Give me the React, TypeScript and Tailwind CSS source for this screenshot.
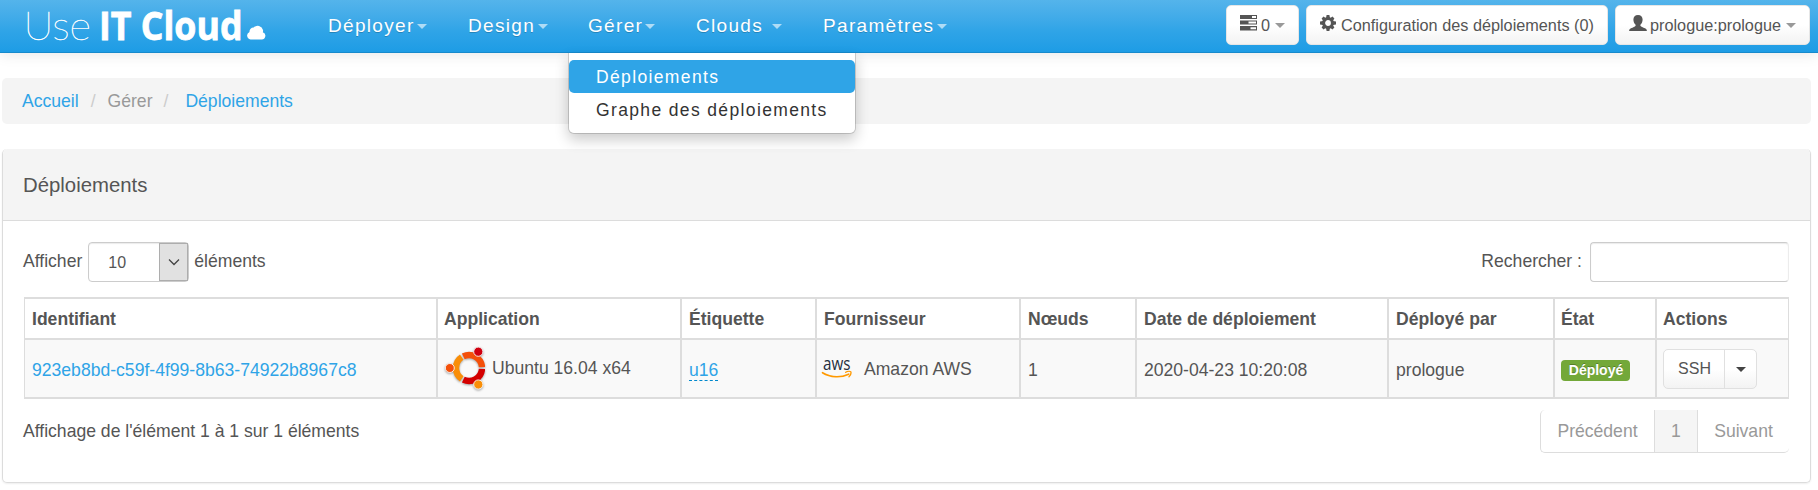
import React from "react";

const Caret = ({ className = "" }: { className?: string }) => (
  <span
    className={`inline-block h-0 w-0 border-x-[5px] border-t-[5px] border-x-transparent ${className}`}
  />
);

const Logo = () => (
  <svg className="h-[52px] w-[328px] shrink-0" viewBox="0 0 328 52" fill="#fff">
    <text x="23.500" y="39.5" fontFamily="Lato, sans-serif" fontWeight="100" fontSize="39" textLength="67.500" lengthAdjust="spacingAndGlyphs" stroke="#fff" strokeWidth="0.4">
      Use
    </text>
    <text x="99" y="39.5" fontFamily="'Open Sans', sans-serif" fontWeight="700" fontSize="38.5" textLength="143.5" lengthAdjust="spacingAndGlyphs" stroke="#fff" strokeWidth="0.8">
      IT Cloud
    </text>
    <path d="M250.500 39.500a4 4 0 0 1-1-7.600 4 4 0 0 1 4.200-4.300 5.400 5.400 0 0 1 9.300 2.400 3.600 3.600 0 0 1-.2 2.300 3.700 3.700 0 0 1-1.500 7.200z" />
  </svg>
);

const ServerIcon = () => (
  <svg className="h-4 w-[17px]" viewBox="0 0 17 16" fill="#555">
    <path fillRule="evenodd" d="M0 0h17v4H0zM12 1h4v2h-4zM0 5.500h17v4H0zM8.500 6.500h7.500v2H8.500zM0 11h17v4.500H0zM10.500 12.200h5.500v2h-5.500z" />
  </svg>
);

const GearIcon = () => (
  <svg className="h-4 w-4" viewBox="0 0 16 16">
    <circle cx="8" cy="8" r="4.400" fill="none" stroke="#555" strokeWidth="3" />
    <g fill="#555">
      <path d="M6.600 0h2.800l.6 3.200H6zM6.600 16h2.800l.6-3.200H6zM0 6.600v2.800l3.200.6V6zM16 6.600v2.800l-3.200.6V6z" />
      <path d="M1.600 3.500l1.900-1.900 2.800 1.800-2.900 2.900zM14.400 3.500l-1.900-1.900-2.800 1.800 2.900 2.900zM1.600 12.500l1.900 1.900 2.800-1.800-2.900-2.900zM14.400 12.500l-1.900 1.900-2.800-1.800 2.900-2.900z" />
    </g>
  </svg>
);

const UserIcon = () => (
  <svg className="h-4 w-[18px]" viewBox="0 0 18 16" fill="#555">
    <path d="M9 0c2.900 0 4.600 1.900 4.600 4.600 0 2.200-.8 4.200-2.200 5.200v1c.6 1.100 2.600 1.700 4.600 2.500 1.200.5 1.800 1.300 1.900 2.700H.1c.1-1.400.7-2.200 1.900-2.700 2-.8 4-1.400 4.600-2.500v-1C5.200 8.800 4.400 6.800 4.400 4.600 4.400 1.900 6.100 0 9 0z" />
  </svg>
);

const UbuntuIcon = () => (
  <svg className="h-11 w-10 drop-shadow-[0_1px_1px_rgba(0,0,0,0.35)]" viewBox="0 0 40 44">
    <g fill="none" strokeWidth="6.400">
      <path d="M16.730 31.780A13 13 0 0 1 16.730 10.220" stroke="#f98e08" />
      <path d="M18.300 9.320A13 13 0 0 1 36.970 20.090" stroke="#f4500a" />
      <path d="M36.970 21.910A13 13 0 0 1 18.300 32.680" stroke="#d40000" />
    </g>
    <g stroke="#f9f9f9" strokeWidth="0.900">
      <circle cx="33.300" cy="4.700" r="4.600" fill="#d00010" />
      <circle cx="4.800" cy="21" r="4.500" fill="#f4500a" />
      <circle cx="33.300" cy="37.500" r="4.600" fill="#f98e08" />
    </g>
  </svg>
);

const AwsIcon = () => (
  <svg className="h-5 w-[31px]" viewBox="0 0 31 20">
    <text x="2" y="12.200" fontFamily="'Open Sans', sans-serif" fontWeight="500" fontSize="17.500" textLength="27.500" lengthAdjust="spacingAndGlyphs" fill="#252f3e">
      aws
    </text>
    <path d="M1.500 14.700c8 4.800 18 5.200 26.200 1.500" fill="none" stroke="#f90" strokeWidth="1.600" strokeLinecap="round" />
    <path d="M24.700 14.300c2-1.200 4.500-1.200 5.200-.4.300 1.300-.5 3.600-1.900 4.900" fill="none" stroke="#f90" strokeWidth="1.300" strokeLinecap="round" />
  </svg>
);

const navItems = [
  { label: "Déployer", width: "w-[140px]", caret: "ml-[2px]" },
  { label: "Design", width: "w-[120px]", caret: "ml-[3px]" },
  { label: "Gérer", width: "w-[108px]", caret: "ml-[2px]" },
  { label: "Clouds", width: "w-[127px]", caret: "ml-[9px]" },
  { label: "Paramètres", width: "w-[140px]", caret: "ml-[3px]" },
];

const Menu = () => (
  <div className="absolute top-[53px] left-[-20px] z-10 h-[81px] w-[288px] rounded-b-[6px] border border-t-0 border-black/15 bg-white bg-clip-padding pt-[7px] text-[17.5px] tracking-[1.36px] whitespace-nowrap text-[#333] shadow-[0_6px_14px_rgba(0,0,0,0.2)] [text-shadow:none]">
    <div className="h-[33px] rounded-[5px] bg-[#2fa4e7] pl-[27px] leading-[35px] text-white">Déploiements</div>
    <div className="h-[33px] pl-[27px] leading-[35px]">Graphe des déploiements</div>
  </div>
);

const topButton =
  "flex h-10 shrink-0 items-center rounded-[5px] border border-[#e6e6e6] bg-linear-to-b from-white from-50% to-[#f3f3f3] text-[16.25px] whitespace-nowrap text-[#555]";

const Header = () => (
  <header className="relative z-10 flex h-[53px] border-b border-[#178acc] bg-linear-to-b from-[#54b4eb] via-[#2fa4e7] via-60% to-[#1d9ce5] shadow-[0_1px_14px_rgba(0,0,0,0.1)]">
    <Logo />
    <nav className="flex text-[19px] leading-[51px] tracking-[1.32px] text-white [text-shadow:0_1px_0_rgba(0,0,0,0.2)]">
      {navItems.map((item) => (
        <div key={item.label} className={`relative flex shrink-0 ${item.width}`}>
          {item.label}
          <Caret className={`mt-6 border-t-white/60 ${item.caret}`} />
          {item.label === "Gérer" && <Menu />}
        </div>
      ))}
    </nav>
    <div className="mt-[5px] ml-auto flex gap-[7px] pr-2">
      <div className={`w-[73px] pl-[13px] ${topButton}`}>
        <span className="-mt-1"><ServerIcon /></span>
        <span className="ml-[4px]">0</span>
        <Caret className="ml-[5px] border-t-[#999]" />
      </div>
      <div className={`w-[302px] pl-[13px] ${topButton}`}>
        <span className="-mt-1"><GearIcon /></span>
        <span className="ml-[5px]">Configuration des déploiements (0)</span>
      </div>
      <div className={`w-[195px] pl-[13px] ${topButton}`}>
        <span className="-mt-1"><UserIcon /></span>
        <span className="ml-[3px]">prologue:prologue</span>
        <Caret className="ml-[5px] border-t-[#999]" />
      </div>
    </div>
  </header>
);

const columns = [
  { label: "Identifiant", width: "w-[414px]", pad: "pl-[7px]" },
  { label: "Application", width: "w-[244px]", pad: "pl-[6px]" },
  { label: "Étiquette", width: "w-[135px]", pad: "pl-[7px]" },
  { label: "Fournisseur", width: "w-[204px]", pad: "pl-[7px]" },
  { label: "Nœuds", width: "w-[116px]", pad: "pl-[7px]" },
  { label: "Date de déploiement", width: "w-[252px]", pad: "pl-[7px]" },
  { label: "Déployé par", width: "w-[166px]", pad: "pl-[7px]" },
  { label: "État", width: "w-[102px]", pad: "pl-[6px]" },
  { label: "Actions", width: "w-[132px]", pad: "pl-[6px]" },
];

const cells = [
  <span className="mt-[3px] text-[#2fa4e7]">923eb8bd-c59f-4f99-8b63-74922b8967c8</span>,
  <span className="ml-px flex items-center">
    <UbuntuIcon />
    <span className="-mt-px ml-[7px]">Ubuntu 16.04 x64</span>
  </span>,
  <span className="mt-[3px] border-b border-dashed border-[#0088cc] leading-[20px] text-[#2fa4e7]">u16</span>,
  <span className="-ml-[3px] flex items-center">
    <AwsIcon />
    <span className="mt-px ml-[12px]">Amazon AWS</span>
  </span>,
  <span className="mt-[3px]">1</span>,
  <span className="mt-[3px]">2020-04-23 10:20:08</span>,
  <span className="mt-[3px]">prologue</span>,
  <span className="mt-[4px] block h-[21px] w-[69px] rounded-[4px] bg-[#73a839] pl-px text-center text-[14px] leading-[21px] font-bold text-white [text-shadow:0_-1px_0_rgba(0,0,0,0.25)]">
    Déployé
  </span>,
  <span className="flex h-10 w-[94px] rounded-[5px] border border-[#e0e0e0] bg-linear-to-b from-white from-50% to-[#f3f3f3] text-[16px] leading-[38px]">
    <span className="w-[61px] border-r border-[#e0e0e0] pl-px text-center">SSH</span>
    <span className="flex flex-1 items-center justify-center">
      <Caret className="mt-0.5 border-t-[#444]" />
    </span>
  </span>,
];

export default function App() {
  return (
    <div className="h-[490px] w-[1818px] overflow-hidden bg-white font-['Liberation_Sans',Arial,sans-serif] text-[17.58px] text-[#555]">
      <Header />
      <div className="mt-[25px] ml-[2px] flex h-[46px] w-[1809px] items-center rounded-[5px] bg-[#f4f4f4] pl-[20px] whitespace-pre">
        <span className="text-[#2fa4e7]">Accueil</span>
        <span className="ml-[12px] text-[#ccc]">/</span>
        <span className="ml-[12px] text-[#999]">Gérer</span>
        <span className="ml-[11px] text-[#ccc]">/</span>
        <span className="ml-[17px] text-[#2fa4e7]">Déploiements</span>
      </div>
      <section className="mt-[25px] ml-[2px] h-[334px] w-[1809px] rounded-[5px] border border-t-0 border-[#dcdcdc] shadow-[0_1px_2px_rgba(0,0,0,0.07)]">
        <h2 className="flex h-[72px] items-center rounded-t-[5px] border-b border-[#dcdcdc] bg-[#f4f4f4] pt-[2px] pl-5 text-[20.35px]">Déploiements</h2>
        <div className="mt-[21px] flex h-10 items-center pr-[21px] pl-5">
          <span className="-mt-px">Afficher</span>
          <div className="ml-[6px] flex h-10 w-[101px] rounded-[4px] border border-[#ccc] p-0 text-[16px] shadow-[inset_0_1px_1px_rgba(0,0,0,0.08)]">
            <span className="flex-1 pl-[19px] leading-[40px]">10</span>
            <span className="flex w-[29px] items-center justify-center border border-[#adadad] bg-[#e1e1e1]">
              <svg className="h-2 w-3" viewBox="0 0 12 8" fill="none" stroke="#444" strokeWidth="1.300">
                <path d="M1 1.500l5 5 5-5" />
              </svg>
            </span>
          </div>
          <span className="-mt-px ml-[5px]">éléments</span>
          <span className="-mt-px ml-auto">Rechercher :</span>
          <div className="ml-[8px] h-10 w-[199px] rounded-[4px] border border-[#ccc] border-r-[#ececec] shadow-[inset_0_1px_1px_rgba(0,0,0,0.08)]" />
        </div>
        <div className="mt-[15px] ml-[21px] w-[1765px] border-t-2 border-[#ddd]">
          <div className="flex h-[41px] border-b-2 border-[#ddd] font-bold">
            {columns.map((c) => (
              <div key={c.label} className={`flex shrink-0 items-center border-r-2 border-[#ddd] pt-[2px] first:border-l last:border-r ${c.pad} ${c.width}`}>
                {c.label}
              </div>
            ))}
          </div>
          <div className="flex h-[59px] border-b-2 border-[#ddd] bg-[#f9f9f9]">
            {cells.map((cell, i) => (
              <div key={columns[i].label} className={`flex shrink-0 items-center border-r-2 border-[#ddd] first:border-l last:border-r ${columns[i].pad} ${columns[i].width}`}>
                {cell}
              </div>
            ))}
          </div>
        </div>
        <div className="mt-[11px] flex h-[43px] items-center justify-between pr-[21px] pl-[20px]">
          <span className="-mt-px">Affichage de l'élément 1 à 1 sur 1 éléments</span>
          <div className="flex h-[43px] w-[249px] rounded-[5px] border border-t-0 border-r-0 border-[#ddd] text-center leading-[43px] text-[#999]">
            <span className="w-[113px]">Précédent</span>
            <span className="w-[44px] border-x border-[#ddd] bg-[#f5f5f5]">1</span>
            <span className="flex-1">Suivant</span>
          </div>
        </div>
      </section>
    </div>
  );
}
